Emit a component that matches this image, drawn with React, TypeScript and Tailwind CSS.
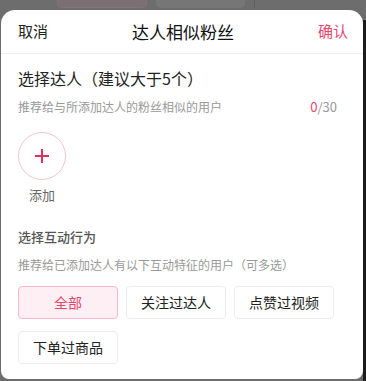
const font = { fontFamily: '"Noto Sans CJK SC", "Noto Sans", sans-serif' };

const actions = ["全部", "关注过达人", "点赞过视频", "下单过商品"];

export default function App() {
  const selected = "全部";
  return (
    <div className="relative h-[381px] w-[366px] overflow-hidden bg-[#6e6d6e]" style={font}>
      {/* page peeking behind the sheet */}
      <div className="flex h-[10px] gap-[9px] pl-[57px]">
        <div className="h-[8px] w-[90px] rounded-b-[5px] border border-t-0 border-[#8a7078] bg-[#7a7074]" />
        <div className="h-[8px] w-[89px] rounded-b-[5px] bg-[#777677]" />
        <div className="h-[8px] w-[1px] bg-[#5e5e5e]" />
      </div>
      <div className="flex h-[371px]">
        <div className="ml-[1px] flex h-[369px] flex-1 flex-col rounded-t-[14px] rounded-b-[8px] bg-white">
          <div className="flex h-[44px] items-center justify-between border-b border-[#eeeeee] pl-[17px] pr-[15px]">
            <span className="w-[50px] text-[15px] text-[#222]">取消</span>
            <span className="text-[17px] text-[#111]">达人相似粉丝</span>
            <span className="w-[50px] text-right text-[15px] text-[#e8466d]">确认</span>
          </div>

          <div className="flex flex-col pl-[17px] pr-[26px]">
            <div className="mt-[13px] text-[16px] leading-[22px] text-[#222]">选择达人（建议大于5个）</div>
            <div className="mt-[9px] flex items-center justify-between text-[12px] leading-[18px] text-[#999]">
              <span>推荐给与所添加达人的粉丝相似的用户</span>
              <span className="text-[13px]">
                <span className="text-[#e8466d]">0</span>/30
              </span>
            </div>

            <div className="mt-[16px] flex w-[48px] flex-col items-center">
              <div className="flex h-[48px] w-[48px] items-center justify-center rounded-full border border-[#f2c6d1]">
                <svg width="14" height="14" viewBox="0 0 14 14">
                  <path d="M7 0v14M0 7h14" stroke="#e0305c" strokeWidth="2" />
                </svg>
              </div>
              <span className="mt-[6px] text-[13px] leading-[18px] text-[#666]">添加</span>
            </div>

            <div className="mt-[23px] text-[13px] font-medium leading-[20px] text-[#555]">选择互动行为</div>
            <div className="mt-[9px] text-[12px] leading-[18px] text-[#999]">
              推荐给已添加达人有以下互动特征的用户（可多选）
            </div>

            <div className="mt-[12px] flex flex-wrap gap-x-[8px] gap-y-[12px]">
              {actions.map((a) =>
                a === selected ? (
                  <div
                    key={a}
                    className="flex h-[33px] w-[100px] items-center justify-center rounded-[4px] border border-[#f5b8c8] bg-[#fdeff3] text-[14px] text-[#e8466d]"
                  >
                    {a}
                  </div>
                ) : (
                  <div
                    key={a}
                    className="flex h-[33px] w-[100px] items-center justify-center rounded-[4px] border border-[#ececec] bg-white text-[14px] text-[#222]"
                  >
                    {a}
                  </div>
                )
              )}
            </div>
          </div>
        </div>
        <div className="mt-[10px] w-[3px] bg-[#1c1c1c]" />
      </div>
    </div>
  );
}
